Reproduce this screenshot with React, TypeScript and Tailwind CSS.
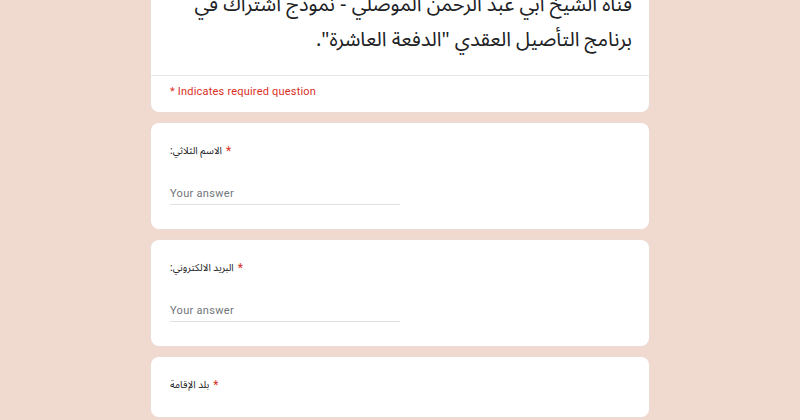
import React from 'react';

const questions = [
  { id: 1, label: 'الاسم الثلاثي:' },
  { id: 2, label: 'البريد الالكتروني:' },
  { id: 3, label: 'بلد الإقامة' },
];

const arabic = { fontFamily: '"Noto Sans Arabic", "DejaVu Sans", sans-serif' };
const roboto = { fontFamily: 'Roboto, sans-serif' };

function QuestionCard({ label, last }: { label: string; last?: boolean }) {
  return (
    <div className="bg-white rounded-lg shadow-[0_0_0_1px_#ecdcd5] pl-[19px] pr-6 pt-[20px] pb-[24px] mt-[11px]">
      <div className="flex items-center gap-[4px] h-[16px] leading-4">
        <span dir="rtl" className="text-[10px] text-[#202124]" style={arabic}>{label}</span>
        <span className="text-[12px] text-[#d93025]" style={roboto}>*</span>
      </div>
      {!last && (
        <div className="mt-[27px] w-[230px] border-b border-[#e0e0e0] pb-[2px] leading-4">
          <span className="block text-[11px] leading-4 text-[#70757a] tracking-[0.3px]" style={roboto}>
            Your answer
          </span>
        </div>
      )}
    </div>
  );
}

export default function App() {
  return (
    <div className="w-[800px] h-[420px] overflow-hidden bg-[#f0d9cf]">
      <div className="w-[498px] mx-auto">
        {/* Header card (scrolled) */}
        <div className="bg-white rounded-b-lg shadow-[0_0_0_1px_#ecdcd5] -mt-[12px]">
          <div dir="rtl" className="px-[17px] pb-[17px] text-[20px] leading-[35px] text-[#202124]" style={arabic}>
            <div className="whitespace-nowrap">قناة الشيخ ابي عبد الرحمن الموصلي - نموذج اشتراك في</div>
            <div className="whitespace-nowrap">برنامج التأصيل العقدي "الدفعة العاشرة".</div>
          </div>
          <div className="border-t border-[#e6e6e6] pl-[19px] pt-[8px] h-[37px]">
            <span className="block text-[11px] leading-4 text-[#d93025] tracking-[0.2px]" style={roboto}>
              * Indicates required question
            </span>
          </div>
        </div>

        {questions.map((q, i) => (
          <QuestionCard key={q.id} label={q.label} last={i === questions.length - 1} />
        ))}
      </div>
    </div>
  );
}
